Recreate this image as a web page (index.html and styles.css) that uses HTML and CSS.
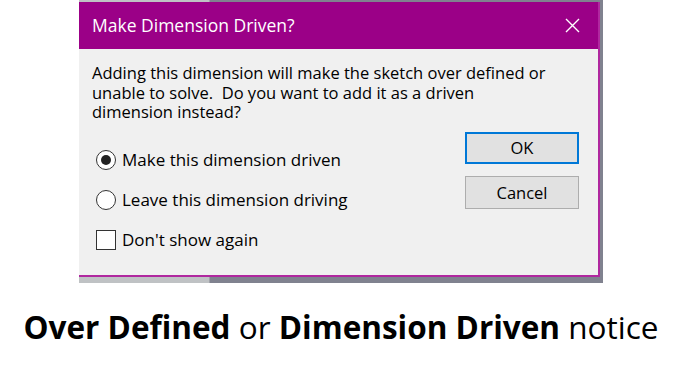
FILE: index.html
```html
<!DOCTYPE html>
<html lang="en">
<head>
    <meta charset="UTF-8">
    <meta name="viewport" content="width=device-width, initial-scale=1.0">
    <title>Make Dimension Driven?</title>
    <link rel="stylesheet" href="styles.css">
</head>
<body>
    <div class="shot">
        <div class="dialog">
            <div class="titlebar">
                <span class="title">Make Dimension Driven?</span>
                <svg class="close" width="15" height="15" viewBox="0 0 15 15">
                    <path d="M1 1 L14 14 M14 1 L1 14" stroke="#fff" stroke-width="1.4" fill="none"/>
                </svg>
            </div>
            <div class="body">
                <p class="message">Adding this dimension will make the sketch over defined or unable to solve.&nbsp; Do you want to add it as a driven dimension instead?</p>
                <div class="lower">
                    <div class="options">
                        <label class="row"><span class="radio checked"></span>Make this dimension driven</label>
                        <label class="row"><span class="radio"></span>Leave this dimension driving</label>
                        <label class="row"><span class="check"></span>Don't show again</label>
                    </div>
                    <div class="buttons">
                        <button class="btn default">OK</button>
                        <button class="btn">Cancel</button>
                    </div>
                </div>
            </div>
        </div>
    </div>
    <h1 class="caption"><b>Over Defined</b> or <b>Dimension Driven</b> notice</h1>
</body>
</html>
```

FILE: styles.css
```css
body {
    margin: 0;
    background: #fff;
    font-family: "Open Sans", sans-serif;
}
.shot {
    margin-left: 79px;
    width: 524px;
    height: 283px;
    padding-top: 2px;
    box-sizing: border-box;
    background: linear-gradient(to right, #bfc2c4 0, #bfc2c4 130px, #80828f 131px, #80828f 100%);
}
.dialog {
    width: 521px;
    height: 275px;
    background: #f0f0f0;
    border-right: 2px solid #b0279f;
    border-bottom: 2px solid #b0279f;
    box-sizing: border-box;
    display: flex;
    flex-direction: column;
}
.titlebar {
    height: 47px;
    background: #9b0087;
    display: flex;
    align-items: center;
    justify-content: space-between;
    padding: 0 18px 0 13px;
    color: #fff;
}
.title {
    font-size: 17.5px;
    margin-top: -1px;
}
.body {
    flex: 1;
    padding: 14px 0 0 13px;
    color: #000;
    font-size: 16.5px;
}
.message {
    margin: 0;
    line-height: 19.5px;
    width: 460px;
}
.lower {
    display: flex;
    justify-content: space-between;
    margin-top: 10px;
    padding-right: 19px;
}
.options {
    padding-top: 8px;
    margin-left: 4px;
}
.row {
    display: flex;
    align-items: center;
    height: 40px;
    gap: 6px;
    font-size: 17px;
}
.radio {
    width: 18px;
    height: 18px;
    border: 1px solid #333;
    border-radius: 50%;
    background: #fff;
    display: flex;
    align-items: center;
    justify-content: center;
}
.radio.checked::after {
    content: "";
    width: 10px;
    height: 10px;
    border-radius: 50%;
    background: #222;
}
.check {
    width: 18px;
    height: 18px;
    border: 1px solid #333;
    background: #fff;
}
.buttons {
    display: flex;
    flex-direction: column;
    gap: 12px;
}
.btn {
    width: 114px;
    height: 33px;
    font-family: inherit;
    font-size: 16.5px;
    color: #000;
    background: #e1e1e1;
    border: 1px solid #adadad;
    padding: 0;
}
.btn.default {
    height: 32px;
    border: 2px solid #0078d7;
}
.caption {
    margin: 22px 0 0;
    text-align: center;
    font-size: 31.5px;
    font-weight: normal;
    color: #000;
}
.caption b {
    font-weight: 700;
}
```
